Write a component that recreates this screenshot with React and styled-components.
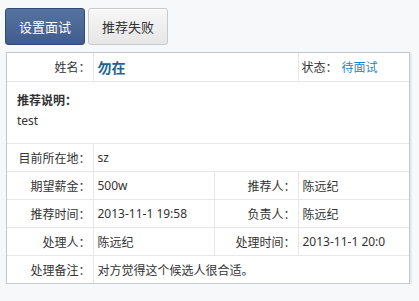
import React from "react";
import styled, { createGlobalStyle } from "styled-components";

const Global = createGlobalStyle`
  html, body { margin: 0; padding: 0; background: #f7f8fa; }
  body { font-family: "Noto Sans", "Noto Sans CJK SC", sans-serif; font-size: 12px; color: #333; }
`;

const Page = styled.div`
  padding: 8px 0 0 5px;
`;

const Toolbar = styled.div`
  display: flex;
  gap: 3px;
  margin-bottom: 7px;
`;

const Button = styled.button`
  width: 80px;
  height: 37px;
  border-radius: 3px;
  font-family: "Noto Sans CJK SC", sans-serif;
  font-size: 13px;
  padding: 0;
  cursor: pointer;
  border: 1px solid ${(p) => (p.$primary ? "#2f4a7a" : "#c9c9c9")};
  color: ${(p) => (p.$primary ? "#fff" : "#333")};
  background: ${(p) =>
    p.$primary
      ? "linear-gradient(#56739f, #3f5c8e)"
      : "linear-gradient(#f7f7f7, #e6e6e6)"};
  box-shadow: ${(p) => (p.$primary ? "none" : "inset 0 1px 0 #fff")};
`;

const Card = styled.div`
  margin-left: 1px;
  width: 404px;
  background: #fff;
  border: 1px solid #c8c8c8;
  box-shadow: 1px 1px 2px rgba(0, 0, 0, 0.12);
  box-sizing: border-box;
`;

const Table = styled.table`
  width: 100%;
  border-collapse: collapse;
  table-layout: fixed;
  font-family: "Noto Sans CJK SC", sans-serif;
  font-size: 12px;
  color: #333;
`;

const Row = styled.tr`
  height: ${(p) => p.$h || 28}px;
  border-top: ${(p) => (p.$first ? "none" : "1px solid #e6e6e6")};
`;

const Label = styled.td`
  text-align: right;
  padding: 0 2px 0 0;
  border-right: 1px solid #e6e6e6;
  white-space: nowrap;
  vertical-align: middle;
`;

const Value = styled.td`
  padding: 0 0 0 4px;
  border-right: 1px solid #e6e6e6;
  white-space: nowrap;
  overflow: hidden;
  vertical-align: middle;
  font-family: ${(p) => (p.$latin ? '"Noto Sans", "Noto Sans CJK SC", sans-serif' : '"Noto Sans CJK SC", sans-serif')};
  &:last-child { border-right: none; }
`;

const Name = styled.span`
  color: #1b6690;
  font-weight: bold;
  font-size: 14px;
`;

const StatusCell = styled.td`
  padding: 0 0 0 3px;
  white-space: nowrap;
  vertical-align: middle;
`;

const StatusValue = styled.span`
  color: #1f85c0;
  margin-left: 4px;
`;

const NoteCell = styled.td`
  padding: 9px 0 0 10px;
  vertical-align: top;
`;

const NoteTitle = styled.div`
  font-weight: bold;
  line-height: 18px;
`;

const NoteText = styled.div`
  font-family: "Noto Sans", sans-serif;
  margin-top: 3px;
  line-height: 18px;
`;

export default function App() {
  return (
    <Page>
      <Global />
      <Toolbar>
        <Button $primary>设置面试</Button>
        <Button>推荐失败</Button>
      </Toolbar>
      <Card>
        <Table>
          <colgroup>
            <col style={{ width: 86 }} />
            <col style={{ width: 121 }} />
            <col style={{ width: 84 }} />
            <col />
          </colgroup>
          <tbody>
            <Row $first $h={28}>
              <Label>姓名：</Label>
              <Value colSpan={2}>
                <Name>勿在</Name>
              </Value>
              <StatusCell>
                状态：<StatusValue>待面试</StatusValue>
              </StatusCell>
            </Row>
            <Row $h={62}>
              <NoteCell colSpan={4}>
                <NoteTitle>推荐说明：</NoteTitle>
                <NoteText>test</NoteText>
              </NoteCell>
            </Row>
            <Row>
              <Label>目前所在地：</Label>
              <Value colSpan={3} $latin>sz</Value>
            </Row>
            <Row>
              <Label>期望薪金：</Label>
              <Value $latin>500w</Value>
              <Label>推荐人：</Label>
              <Value>陈远纪</Value>
            </Row>
            <Row>
              <Label>推荐时间：</Label>
              <Value $latin>2013-11-1 19:58</Value>
              <Label>负责人：</Label>
              <Value>陈远纪</Value>
            </Row>
            <Row>
              <Label>处理人：</Label>
              <Value>陈远纪</Value>
              <Label>处理时间：</Label>
              <Value $latin>2013-11-1 20:0</Value>
            </Row>
            <Row>
              <Label>处理备注：</Label>
              <Value colSpan={3}>对方觉得这个候选人很合适。</Value>
            </Row>
          </tbody>
        </Table>
      </Card>
    </Page>
  );
}
